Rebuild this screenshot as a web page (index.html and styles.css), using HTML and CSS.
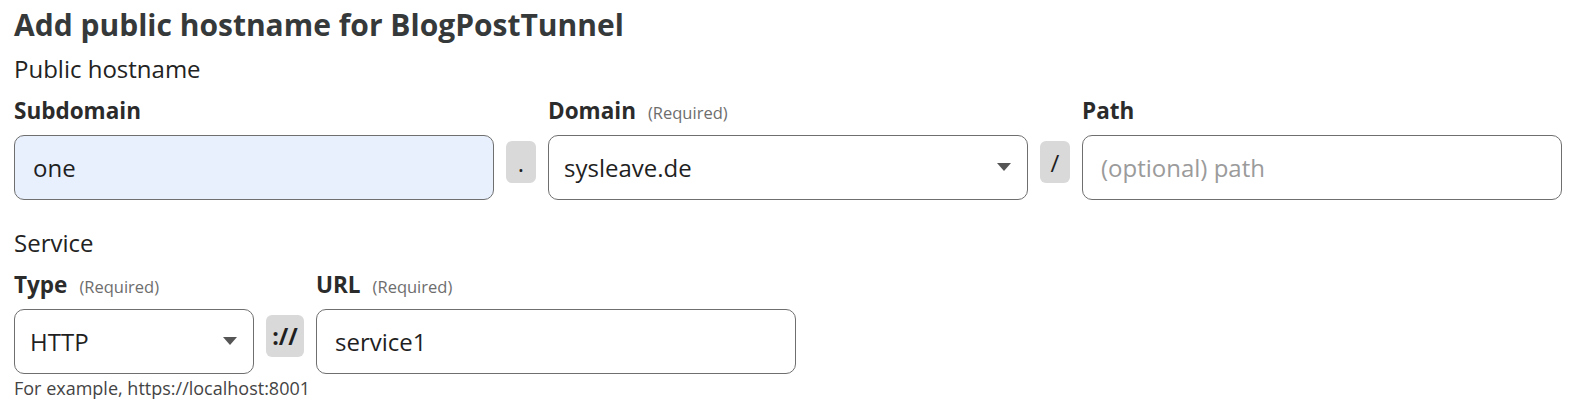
FILE: index.html
```html
<!DOCTYPE html>
<html lang="en">
<head>
<meta charset="utf-8">
<title>Add public hostname</title>
<link rel="stylesheet" href="styles.css">
</head>
<body>
<div class="page">
  <h2 class="title">Add public hostname for BlogPostTunnel</h2>

  <div class="section-title">Public hostname</div>
  <div class="grid grid-host">
    <div class="label"><span class="label-main">Subdomain</span></div>
    <div></div>
    <div class="label"><span class="label-main">Domain</span><span class="req">(Required)</span></div>
    <div></div>
    <div class="label"><span class="label-main">Path</span></div>

    <div class="control control-filled"><span class="value">one</span></div>
    <div class="sep">.</div>
    <div class="control control-select"><span class="value">sysleave.de</span><span class="caret"></span></div>
    <div class="sep">/</div>
    <div class="control"><span class="placeholder">(optional) path</span></div>
  </div>

  <div class="section-title section-gap">Service</div>
  <div class="grid grid-service">
    <div class="label"><span class="label-main">Type</span><span class="req">(Required)</span></div>
    <div></div>
    <div class="label"><span class="label-main">URL</span><span class="req">(Required)</span></div>

    <div class="control control-select"><span class="value">HTTP</span><span class="caret"></span></div>
    <div class="sep sep-wide">://</div>
    <div class="control"><span class="value">service1</span></div>

    <div class="hint">For example, https://localhost:8001</div>
  </div>
</div>
</body>
</html>
```

FILE: styles.css
```css
* { box-sizing: border-box; }

body {
  margin: 0;
  background: #ffffff;
  font-family: "Open Sans", "Noto Sans", sans-serif;
  color: #313131;
}

.page {
  padding: 7px 14px;
}

.title {
  margin: 0;
  font-size: 30px;
  line-height: 36px;
  font-weight: 700;
  color: #36393a;
}

.section-title {
  margin-top: 10px;
  font-size: 24px;
  line-height: 32px;
  font-weight: 400;
  color: #222;
}

.section-gap {
  margin-top: 27px;
}

.grid {
  display: grid;
  column-gap: 12px;
  margin-top: 12px;
}

.grid-host {
  grid-template-columns: 480px 30px 480px 30px 480px;
}

.grid-service {
  grid-template-columns: 240px 38px 480px;
}

.label {
  display: flex;
  align-items: baseline;
  gap: 12px;
  height: 28px;
  margin-bottom: 10px;
}

.label-main {
  font-size: 22.5px;
  line-height: 28px;
  font-weight: 700;
  color: #2b2b2b;
}

.req {
  font-size: 16.5px;
  line-height: 28px;
  color: #6d6d6d;
}

.control {
  position: relative;
  height: 65px;
  border: 1px solid #6f6f6f;
  border-radius: 10px;
  background: #fff;
  display: flex;
  align-items: center;
  padding: 0 18px;
  font-size: 24px;
  color: #1f1f1f;
}

.control-select {
  padding-left: 15px;
}

.control-filled {
  background: #e8f0fe;
}

.placeholder {
  color: #9b9b9b;
}

.caret {
  position: absolute;
  right: 16px;
  top: 27px;
  width: 0;
  height: 0;
  border-left: 7px solid transparent;
  border-right: 7px solid transparent;
  border-top: 8px solid #555;
}

.sep {
  align-self: start;
  margin-top: 6px;
  height: 42px;
  border-radius: 6px;
  background: #d9d9d9;
  display: flex;
  align-items: center;
  justify-content: center;
  font-size: 24px;
  color: #1f1f1f;
}

.sep-wide {
  font-weight: 700;
  font-size: 23px;
}

.hint {
  grid-column: 1 / -1;
  margin-top: 2px;
  font-size: 18px;
  line-height: 24px;
  color: #444;
}
```
